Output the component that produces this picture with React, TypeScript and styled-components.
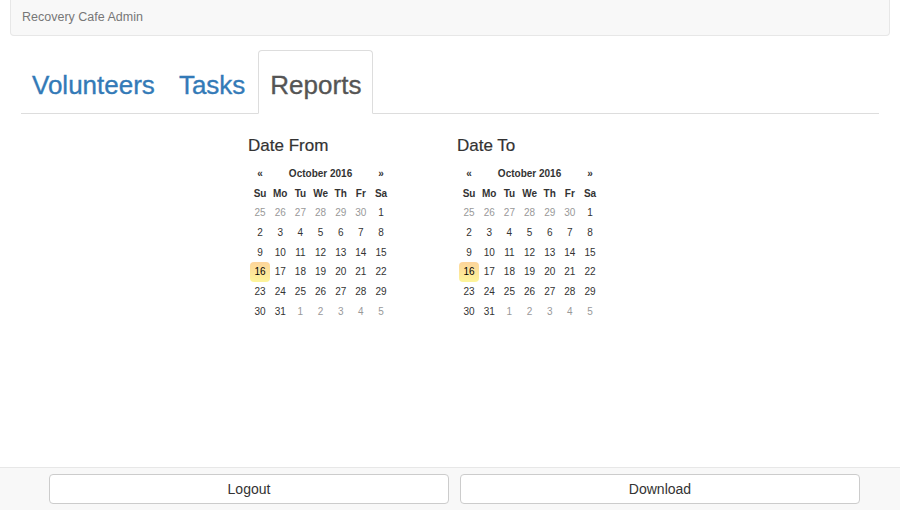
import React from "react";
import styled, { createGlobalStyle } from "styled-components";

const Global = createGlobalStyle`
  html, body { margin: 0; padding: 0; background: #fff; }
  body { font-family: "Liberation Sans", Arial, sans-serif; color: #333; }
  * { box-sizing: border-box; }
`;

const Page = styled.div`
  display: flex;
  flex-direction: column;
  height: 100vh;
`;

const Navbar = styled.div`
  margin: 0 10px;
  height: 36px;
  background: #f8f8f8;
  border: 1px solid #e7e7e7;
  border-top: none;
  border-radius: 0 0 4px 4px;
  display: flex;
  align-items: center;
  padding-left: 11px;
  padding-bottom: 1px;
`;

const Brand = styled.span`
  font-size: 12.5px;
  color: #777;
`;

const Content = styled.div`
  flex: 1;
  padding: 14px 21px 0;
`;

const Tabs = styled.ul`
  list-style: none;
  margin: 0;
  padding: 0;
  display: flex;
  border-bottom: 1px solid #ddd;
`;

const Tab = styled.li<{ $active?: boolean }>`
  margin-right: 2px;
  margin-bottom: -1px;
  padding: 20px ${(p) => (p.$active ? "11px" : "10px")} 13px;
  font-size: 26px;
  line-height: 29px;
  color: ${(p) => (p.$active ? "#555" : "#337ab7")};
  -webkit-text-stroke: 0.35px currentColor;
  background: ${(p) => (p.$active ? "#fff" : "transparent")};
  border: 1px solid ${(p) => (p.$active ? "#ddd" : "transparent")};
  border-bottom-color: ${(p) => (p.$active ? "#fff" : "transparent")};
  border-radius: 4px 4px 0 0;
  cursor: pointer;
`;

const Pickers = styled.div`
  display: flex;
  padding-left: 227px;
  padding-top: 23px;
`;

const PickerCol = styled.div`
  width: 209px;
`;

const Heading = styled.h4`
  margin: 0 0 8px;
  font-size: 17px;
  line-height: 18.7px;
  font-weight: normal;
  -webkit-text-stroke: 0.2px currentColor;
  color: #333;
`;

const Table = styled.table`
  border-collapse: collapse;
  margin-left: 2px;
  font-size: 10px;
`;

const Cell = styled.td<{ $muted?: boolean; $today?: boolean; $bold?: boolean }>`
  width: 20.17px;
  height: 19.7px;
  padding: 0;
  text-align: center;
  line-height: 19px;
  font-weight: ${(p) => (p.$bold ? "bold" : "normal")};
  color: ${(p) => (p.$muted ? "#999" : p.$today ? "#000" : "#333")};
  border-radius: 4px;
  background: ${(p) =>
    p.$today ? "linear-gradient(to bottom, #fdd49a, #fdf59a)" : "transparent"};
`;

const Footer = styled.div`
  height: 43px;
  background: #f8f8f8;
  border-top: 1px solid #e7e7e7;
  display: flex;
  gap: 11px;
  padding: 6px 0 0 49px;
`;

const Button = styled.button`
  width: 400px;
  height: 30px;
  background: #fff;
  border: 1px solid #ccc;
  border-radius: 4px;
  font-family: "Liberation Sans", Arial, sans-serif;
  font-size: 14px;
  color: #333;
  cursor: pointer;
`;

const dows = ["Su", "Mo", "Tu", "We", "Th", "Fr", "Sa"];

type Day = { n: number; muted: boolean };

const weeks: Day[][] = (() => {
  const days: Day[] = [];
  for (let d = 25; d <= 30; d++) days.push({ n: d, muted: true });
  for (let d = 1; d <= 31; d++) days.push({ n: d, muted: false });
  for (let d = 1; d <= 5; d++) days.push({ n: d, muted: true });
  const out: Day[][] = [];
  for (let i = 0; i < days.length; i += 7) out.push(days.slice(i, i + 7));
  return out;
})();

const Calendar: React.FC<{ title: string }> = ({ title }) => (
  <PickerCol>
    <Heading>{title}</Heading>
    <Table>
      <thead>
        <tr>
          <Cell $bold>«</Cell>
          <Cell $bold colSpan={5}>
            October 2016
          </Cell>
          <Cell $bold>»</Cell>
        </tr>
        <tr>
          {dows.map((d) => (
            <Cell key={d} $bold>
              {d}
            </Cell>
          ))}
        </tr>
      </thead>
      <tbody>
        {weeks.map((w, i) => (
          <tr key={i}>
            {w.map((d, j) => (
              <Cell key={j} $muted={d.muted} $today={!d.muted && d.n === 16}>
                {d.n}
              </Cell>
            ))}
          </tr>
        ))}
      </tbody>
    </Table>
  </PickerCol>
);

export default function App() {
  return (
    <>
      <Global />
      <Page>
        <Navbar>
          <Brand>Recovery Cafe Admin</Brand>
        </Navbar>
        <Content>
          <Tabs>
            <Tab>Volunteers</Tab>
            <Tab>Tasks</Tab>
            <Tab $active>Reports</Tab>
          </Tabs>
          <Pickers>
            <Calendar title="Date From" />
            <Calendar title="Date To" />
          </Pickers>
        </Content>
        <Footer>
          <Button>Logout</Button>
          <Button>Download</Button>
        </Footer>
      </Page>
    </>
  );
}
